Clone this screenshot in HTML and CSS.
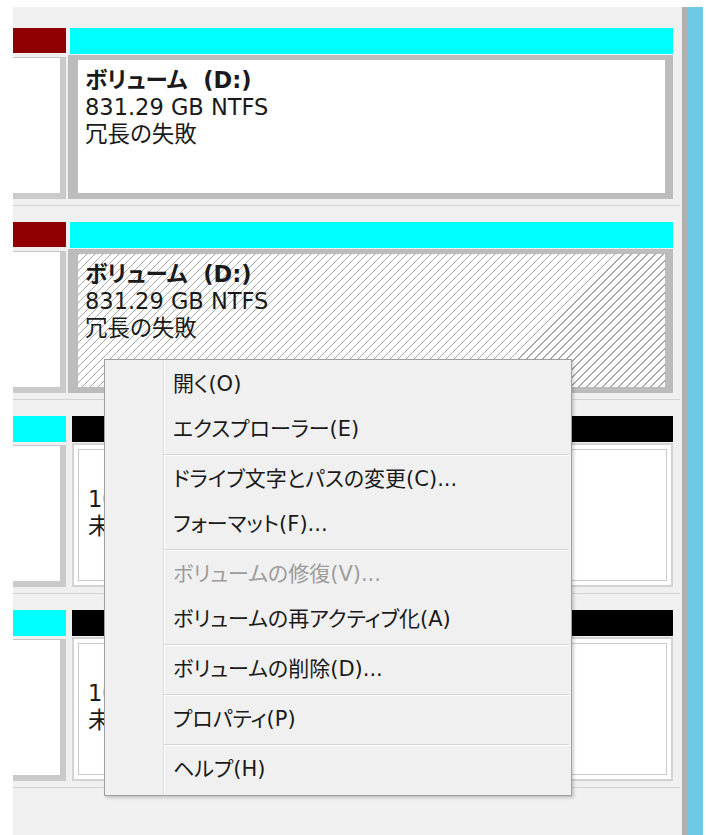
FILE: index.html
```html
<!DOCTYPE html>
<html lang="ja">
<head>
    <meta charset="UTF-8">
    <meta name="viewport" content="width=device-width, initial-scale=1.0">
    <title>ディスクの管理</title>
    <link rel="stylesheet" href="styles.css">
</head>
<body>
    <div class="window">
        <div class="panel">

            <div class="disk">
                <div class="bar bar-red"></div>
                <div class="bar bar-cyan"></div>
                <div class="info"></div>
                <div class="vol">
                    <div class="vol-name">ボリューム&nbsp; (D:)</div>
                    <div>831.29 GB NTFS</div>
                    <div>冗長の失敗</div>
                </div>
            </div>

            <div class="disk">
                <div class="bar bar-red"></div>
                <div class="bar bar-cyan"></div>
                <div class="info"></div>
                <div class="vol vol-selected">
                    <div class="vol-name">ボリューム&nbsp; (D:)</div>
                    <div>831.29 GB NTFS</div>
                    <div>冗長の失敗</div>
                </div>
            </div>

            <div class="disk">
                <div class="bar bar-cyan"></div>
                <div class="bar bar-black"></div>
                <div class="info"></div>
                <div class="vol-free">
                    <div class="vol-inner">
                        <div>10.00 GB</div>
                        <div>未割り当て</div>
                    </div>
                </div>
            </div>

            <div class="disk">
                <div class="bar bar-cyan"></div>
                <div class="bar bar-black"></div>
                <div class="info"></div>
                <div class="vol-free">
                    <div class="vol-inner">
                        <div>10.00 GB</div>
                        <div>未割り当て</div>
                    </div>
                </div>
            </div>

        </div>
        <div class="edge"></div>
    </div>

    <!-- right-click menu for the selected volume -->
    <ul class="menu">
        <li>開く(O)</li>
        <li>エクスプローラー(E)</li>
        <li class="sep"></li>
        <li>ドライブ文字とパスの変更(C)...</li>
        <li>フォーマット(F)...</li>
        <li class="sep"></li>
        <li class="disabled">ボリュームの修復(V)...</li>
        <li>ボリュームの再アクティブ化(A)</li>
        <li class="sep"></li>
        <li>ボリュームの削除(D)...</li>
        <li class="sep"></li>
        <li>プロパティ(P)</li>
        <li class="sep"></li>
        <li>ヘルプ(H)</li>
    </ul>
</body>
</html>
```

FILE: styles.css
```css
* {
    margin: 0;
    padding: 0;
    box-sizing: border-box;
}

body {
    background-color: #fff;
    font-family: "DejaVu Sans", "Noto Sans CJK JP", sans-serif;
    font-feature-settings: "palt";
    color: #1a1a1a;
}

.window {
    display: flex;
    height: 835px;
    padding: 7px 3px 0 13px;
}

.panel {
    flex: 1;
    background-color: #f0f0f0;
    padding: 21px 2px 0 0;
}

.edge {
    width: 21px;
    background-color: #6ccae7;
    border-left: 6px solid #b0b0b0;
}

/* one disk row: colored header strip + boxes */
.disk {
    display: grid;
    grid-template-columns: 53px 1fr;
    grid-template-rows: 26px 145px;
    column-gap: 2px;
    padding: 0 7px 6px 0;
    border-bottom: 1px solid #d2d2d2;
    margin-bottom: 16px;
}

.bar-red {
    background-color: #900000;
    margin-bottom: 1px;
}

.bar-cyan {
    background-color: #00ffff;
}

.disk .bar-cyan:nth-child(2) {
    margin-left: 2px;
}

.bar-black {
    background-color: #000;
    margin-left: 4px;
}

.info {
    margin-top: 3px;
    background-color: #fff;
    border-top: 1px solid #c4c4c4;
    border-right: 6px solid #cacaca;
    border-bottom: 6px solid #cacaca;
}

.vol {
    margin-top: 1px;
    background-color: #fff;
    border: solid #bcbcbc;
    border-width: 5px 8px 6px 10px;
    padding: 7px 7px;
    font-size: 22.5px;
    line-height: 27px;
}

.vol-name {
    font-weight: bold;
}

.vol-selected {
    background: repeating-linear-gradient(135deg, #ababab 0 1.2px, #fff 1.2px 5.66px);
}

.vol-free {
    margin: 1px 0 0 4px;
    background-color: #fff;
    border: 2px solid #d3d3d3;
    padding: 4px;
    font-size: 22.5px;
    line-height: 27px;
}

.vol-inner {
    height: 100%;
    border: 1px solid #cacaca;
    padding: 36px 0 0 9px;
}

/* context menu */
.menu {
    position: absolute;
    left: 104px;
    top: 359px;
    width: 468px;
    list-style: none;
    background: linear-gradient(to right, transparent 58px, #dcdcdc 58px 59px, #fff 59px 60px, transparent 60px), #f0f0f0;
    border: 1px solid #a0a0a0;
    box-shadow: 2px 2px 3px rgba(0, 0, 0, 0.18);
    padding: 2px 2px 3px;
    font-size: 21px;
}

.menu li {
    height: 45px;
    line-height: 45px;
    padding-left: 66px;
    white-space: nowrap;
}

.menu li.sep {
    height: 0;
    margin: 2px 0 1px 57px;
    padding: 0;
    border-top: 1px solid #d5d5d5;
    border-bottom: 1px solid #fff;
}

.menu li.disabled {
    color: #9c9c9c;
}
```
